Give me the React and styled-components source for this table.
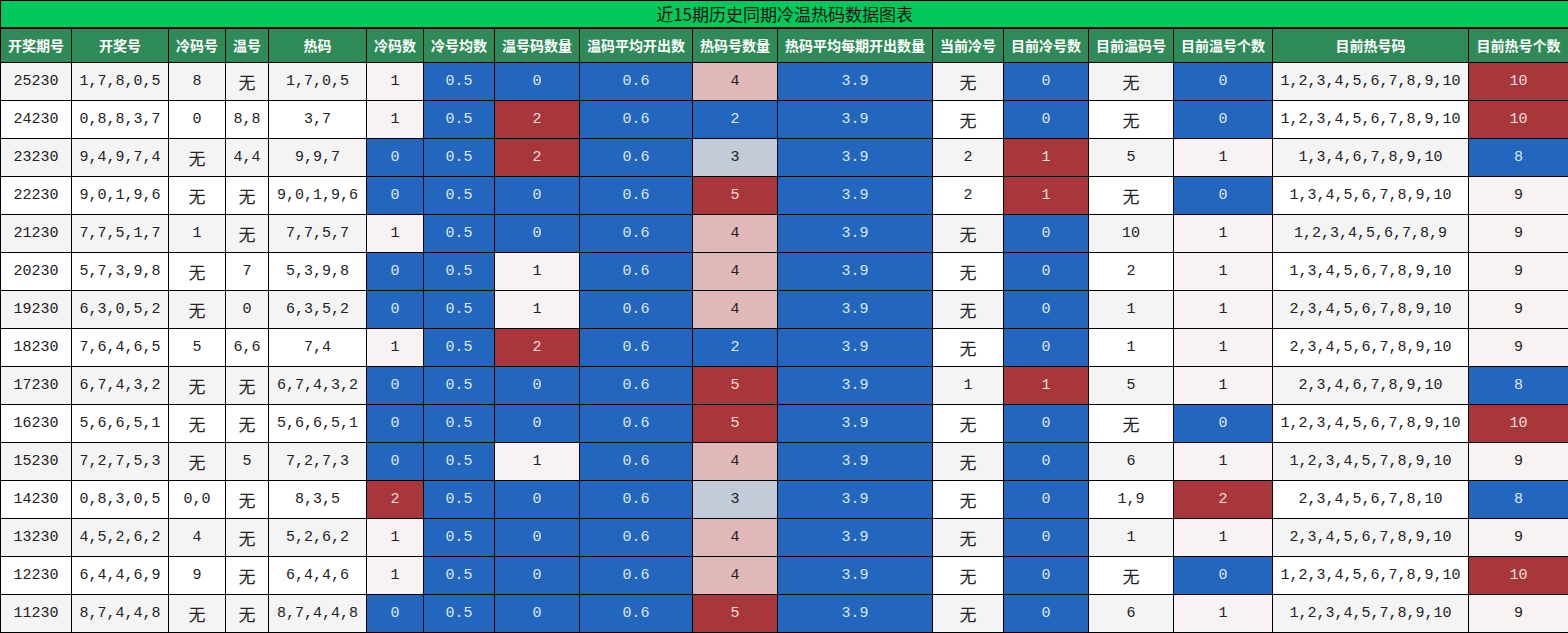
import React from 'react';
import styled, { createGlobalStyle } from 'styled-components';

const GlobalStyle = createGlobalStyle`
  html, body {
    margin: 0;
    padding: 0;
    background: #ffffff;
  }
`;

const COLS = [71, 97, 57, 43, 98, 57, 71, 85, 113, 85, 155, 71, 85, 85, 99, 196, 100];

const HEADERS = [
  '开奖期号', '开奖号', '冷码号', '温号', '热码', '冷码数', '冷号均数', '温号码数量',
  '温码平均开出数', '热码号数量', '热码平均每期开出数量', '当前冷号', '目前冷号数',
  '目前温码号', '目前温号个数', '目前热号码', '目前热号个数',
];

const ALL = '1,2,3,4,5,6,7,8,9,10';

// [期号, 开奖号, 冷码号, 温号, 热码, 冷码数, 温号码数量, 热码号数量, 当前冷号, 目前冷号数, 目前温码号, 目前温号个数, 目前热号码, 目前热号个数]
const ROWS = [
  ['25230', '1,7,8,0,5', '8', '无', '1,7,0,5', 1, 0, 4, '无', 0, '无', 0, ALL, 10],
  ['24230', '0,8,8,3,7', '0', '8,8', '3,7', 1, 2, 2, '无', 0, '无', 0, ALL, 10],
  ['23230', '9,4,9,7,4', '无', '4,4', '9,9,7', 0, 2, 3, '2', 1, '5', 1, '1,3,4,6,7,8,9,10', 8],
  ['22230', '9,0,1,9,6', '无', '无', '9,0,1,9,6', 0, 0, 5, '2', 1, '无', 0, '1,3,4,5,6,7,8,9,10', 9],
  ['21230', '7,7,5,1,7', '1', '无', '7,7,5,7', 1, 0, 4, '无', 0, '10', 1, '1,2,3,4,5,6,7,8,9', 9],
  ['20230', '5,7,3,9,8', '无', '7', '5,3,9,8', 0, 1, 4, '无', 0, '2', 1, '1,3,4,5,6,7,8,9,10', 9],
  ['19230', '6,3,0,5,2', '无', '0', '6,3,5,2', 0, 1, 4, '无', 0, '1', 1, '2,3,4,5,6,7,8,9,10', 9],
  ['18230', '7,6,4,6,5', '5', '6,6', '7,4', 1, 2, 2, '无', 0, '1', 1, '2,3,4,5,6,7,8,9,10', 9],
  ['17230', '6,7,4,3,2', '无', '无', '6,7,4,3,2', 0, 0, 5, '1', 1, '5', 1, '2,3,4,6,7,8,9,10', 8],
  ['16230', '5,6,6,5,1', '无', '无', '5,6,6,5,1', 0, 0, 5, '无', 0, '无', 0, ALL, 10],
  ['15230', '7,2,7,5,3', '无', '5', '7,2,7,3', 0, 1, 4, '无', 0, '6', 1, '1,2,3,4,5,7,8,9,10', 9],
  ['14230', '0,8,3,0,5', '0,0', '无', '8,3,5', 2, 0, 3, '无', 0, '1,9', 2, '2,3,4,5,6,7,8,10', 8],
  ['13230', '4,5,2,6,2', '4', '无', '5,2,6,2', 1, 0, 4, '无', 0, '1', 1, '2,3,4,5,6,7,8,9,10', 9],
  ['12230', '6,4,4,6,9', '9', '无', '6,4,4,6', 1, 0, 4, '无', 0, '无', 0, ALL, 10],
  ['11230', '8,7,4,4,8', '无', '无', '8,7,4,4,8', 0, 0, 5, '无', 0, '6', 1, '1,2,3,4,5,7,8,9,10', 9],
];

const TONES = {
  blue: { bg: '#2267bd', fg: '#dfe6f2' },
  red: { bg: '#a8373c', fg: '#f1dcdc' },
  pale: { bg: '#f8f2f2', fg: '#222222' },
  rosy: { bg: '#e0b8b7', fg: '#222222' },
  slate: { bg: '#c3cad8', fg: '#222222' },
};

const lowMidHigh = (v) => (v === 0 ? 'blue' : v === 1 ? 'pale' : 'red');
const hotTone = (v) => ({ 2: 'blue', 3: 'slate', 4: 'rosy', 5: 'red' }[v]);
const nowCold = (v) => (v === 0 ? 'blue' : 'red');
const nowHot = (v) => (v === 8 ? 'blue' : v === 9 ? 'pale' : 'red');

const Value = ({ text }) => (text === '无' ? <Wu>无</Wu> : text);

const App = () => (
  <>
    <GlobalStyle />
    <Table>
      <colgroup>
        {COLS.map((w, i) => <col key={i} style={{ width: w }} />)}
      </colgroup>
      <tbody>
        <TitleRow>
          <TitleCell colSpan={17}>近15期历史同期冷温热码数据图表</TitleCell>
        </TitleRow>
        <HeadRow>
          {HEADERS.map((h) => <HeadCell key={h}>{h}</HeadCell>)}
        </HeadRow>
        {ROWS.map((r, i) => {
          const [issue, draw, cold, warm, hot, coldN, warmN, hotN, curCold, curColdN, curWarm, curWarmN, curHot, curHotN] = r;
          const striped = i % 2 === 0;
          return (
            <Row key={issue} $striped={striped}>
              <Cell>{issue}</Cell>
              <Cell>{draw}</Cell>
              <Cell><Value text={cold} /></Cell>
              <Cell><Value text={warm} /></Cell>
              <Cell>{hot}</Cell>
              <Cell $tone={lowMidHigh(coldN)}>{coldN}</Cell>
              <Cell $tone="blue">0.5</Cell>
              <Cell $tone={lowMidHigh(warmN)}>{warmN}</Cell>
              <Cell $tone="blue">0.6</Cell>
              <Cell $tone={hotTone(hotN)}>{hotN}</Cell>
              <Cell $tone="blue">3.9</Cell>
              <Cell><Value text={curCold} /></Cell>
              <Cell $tone={nowCold(curColdN)}>{curColdN}</Cell>
              <Cell><Value text={curWarm} /></Cell>
              <Cell $tone={lowMidHigh(curWarmN)}>{curWarmN}</Cell>
              <Cell>{curHot}</Cell>
              <Cell $tone={nowHot(curHotN)}>{curHotN}</Cell>
            </Row>
          );
        })}
      </tbody>
    </Table>
  </>
);

export default App;

const Table = styled.table`
  width: 1568px;
  table-layout: fixed;
  border-collapse: collapse;
  border: 1px solid #000;
`;

const TitleRow = styled.tr`
  height: 27px;
`;

const TitleCell = styled.td`
  background: #00c85a;
  color: #111;
  font-family: "Noto Sans CJK SC", "Liberation Sans", sans-serif;
  font-size: 17px;
  text-align: center;
  padding: 0;
  border: 1px solid #000;
  border-bottom: 2px solid #000;
  line-height: 24px;
`;

const HeadRow = styled.tr`
  height: 35px;
  background: #2e8b57;
`;

const HeadCell = styled.td`
  color: #ffffff;
  font-family: "Noto Sans CJK SC", "Liberation Sans", sans-serif;
  font-size: 14px;
  font-weight: 700;
  text-align: center;
  padding: 0;
  border: 1px solid #000;
  white-space: nowrap;
  overflow: hidden;
`;

const Row = styled.tr`
  height: 38px;
  background: ${(p) => (p.$striped ? '#f4f4f4' : '#ffffff')};
`;

const Cell = styled.td`
  font-family: "Liberation Mono", "Noto Sans CJK SC", monospace;
  font-size: 15px;
  text-align: center;
  padding: 0;
  border: 1px solid #000;
  white-space: nowrap;
  color: ${(p) => (p.$tone ? TONES[p.$tone].fg : '#222222')};
  background: ${(p) => (p.$tone ? TONES[p.$tone].bg : 'transparent')};
`;

const Wu = styled.span`
  font-family: "Noto Sans CJK SC", sans-serif;
  font-size: 17px;
  vertical-align: -3px;
  color: #222;
`;
